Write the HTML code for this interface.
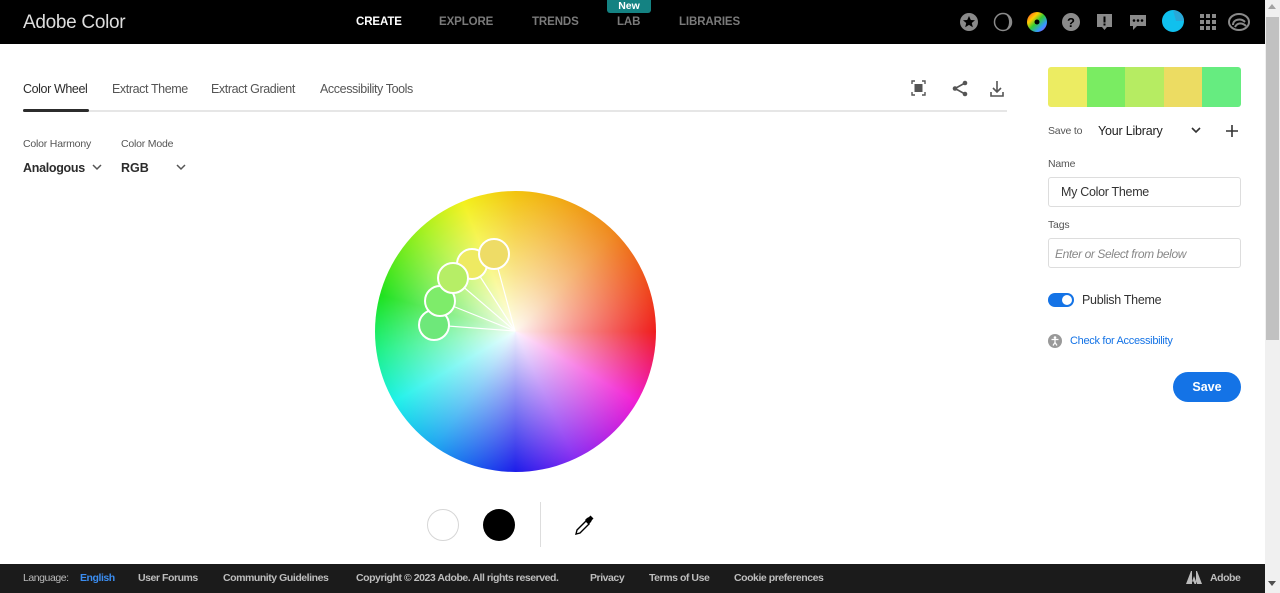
<!DOCTYPE html>
<html><head><meta charset="utf-8">
<style>
*{margin:0;padding:0;box-sizing:border-box}
body{width:1280px;height:593px;overflow:hidden;background:#fff;font-family:"Liberation Sans",sans-serif;position:relative;color:#2c2c2c}
.a{position:absolute;white-space:nowrap}
#top{position:absolute;left:0;top:0;width:1265px;height:44px;background:#000}
.nav{font-size:11.5px;font-weight:bold;color:#7a7a7a;top:16px;letter-spacing:-.1px}
.tab{font-size:12.5px;color:#555;top:82px;letter-spacing:-.4px}
.lbl{font-size:10.5px;color:#555;letter-spacing:-.2px}
#foot{position:absolute;left:0;top:564px;width:1265px;height:29px;background:#1b1b1b}
.f{font-size:10.5px;font-weight:bold;color:#bdbdbd;top:572px;letter-spacing:-.45px}
</style></head><body>
<div id="top"></div>
<div class="a" style="left:23px;top:12px;font-size:19px;color:#ddd;letter-spacing:-.3px">Adobe Color</div>
<div class="a nav" style="left:356px;color:#fff">CREATE</div>
<div class="a nav" style="left:439px">EXPLORE</div>
<div class="a nav" style="left:532px">TRENDS</div>
<div class="a" style="left:607px;top:0;width:44px;height:13px;background:#148282;border-radius:0 0 3px 3px;color:#fff;font-size:10.5px;font-weight:bold;text-align:center;line-height:12px">New</div>
<div class="a nav" style="left:617px">LAB</div>
<div class="a nav" style="left:679px">LIBRARIES</div>
<svg class="a" style="left:958px;top:10px" width="300" height="24" viewBox="0 0 300 24">
<defs><linearGradient id="g" x1="0" y1="0" x2="1" y2="1"><stop offset="0" stop-color="#f33"/><stop offset=".3" stop-color="#fc0"/><stop offset=".5" stop-color="#3c3"/><stop offset=".75" stop-color="#39f"/><stop offset="1" stop-color="#c3f"/></linearGradient></defs>
<circle cx="11" cy="12" r="9" fill="#8a8a8a"/><path d="M11 6l1.8 4 4.2.3-3.2 2.7 1 4.2-3.8-2.3-3.8 2.3 1-4.2-3.2-2.7 4.2-.3z" fill="#000"/>
<circle cx="45" cy="12" r="8.5" fill="none" stroke="#8a8a8a" stroke-width="1.5"/><path d="M45 3.5a8.5 8.5 0 0 1 0 17a6 8.5 0 0 0 0-17z" fill="#8a8a8a"/>
<circle cx="79" cy="12" r="10" fill="url(#g)"/><circle cx="79" cy="12" r="2.5" fill="#000"/>
<circle cx="113" cy="12" r="9" fill="#8a8a8a"/><text x="113" y="17" font-size="13" font-weight="bold" text-anchor="middle" fill="#000" font-family="Liberation Sans">?</text>
<path d="M139 4h15v13h-5l-2.5 3-2.5-3h-5z" fill="#8a8a8a"/><rect x="145.5" y="6.5" width="2" height="6" fill="#000"/><rect x="145.5" y="13.5" width="2" height="2" fill="#000"/>
<path d="M172 5h16v11h-9l-4 4v-4h-3z" fill="#8a8a8a"/><circle cx="176" cy="10.5" r="1.3" fill="#000"/><circle cx="180" cy="10.5" r="1.3" fill="#000"/><circle cx="184" cy="10.5" r="1.3" fill="#000"/>
<circle cx="215" cy="11" r="11" fill="#10c0ee"/><path d="M215 0a11 11 0 0 1 11 11h-8z" fill="#2aa8d8"/>
<g fill="#8a8a8a"><rect x="242" y="4" width="4" height="4"/><rect x="248" y="4" width="4" height="4"/><rect x="254" y="4" width="4" height="4"/><rect x="242" y="10" width="4" height="4"/><rect x="248" y="10" width="4" height="4"/><rect x="254" y="10" width="4" height="4"/><rect x="242" y="16" width="4" height="4"/><rect x="248" y="16" width="4" height="4"/><rect x="254" y="16" width="4" height="4"/></g>
<g fill="none" stroke="#8a8a8a" stroke-width="2"><ellipse cx="281" cy="12" rx="10" ry="8"/><path d="M275 15c0-6 8-7 12-3M277 17c2-4 7-5 11-1"/></g>
</svg>
<div class="a" style="left:1265px;top:0;width:15px;height:593px;background:#f0f0f0"></div>
<div class="a" style="left:1266px;top:17px;width:13px;height:323px;background:#c1c1c1"></div>
<div class="a" style="left:1268px;top:4px;width:0;height:0;border:4px solid transparent;border-bottom:5px solid #a3a3a3;border-top:0"></div>
<div class="a" style="left:1268px;top:581px;width:0;height:0;border:4px solid transparent;border-top:5px solid #505050;border-bottom:0"></div>
<div class="a tab" style="left:23px;color:#2c2c2c">Color Wheel</div>
<div class="a tab" style="left:112px">Extract Theme</div>
<div class="a tab" style="left:211px">Extract Gradient</div>
<div class="a tab" style="left:320px">Accessibility Tools</div>
<div class="a" style="left:23px;top:110px;width:984px;height:2px;background:#e6e6e6"></div>
<div class="a" style="left:23px;top:109px;width:66px;height:3px;background:#2c2c2c;border-radius:2px"></div>
<svg class="a" style="left:908px;top:78px" width="100" height="22">
<g fill="none" stroke="#555" stroke-width="1.4"><path d="M4 6V3h3M14 3h3v3M17 14v3h-3M7 17H4v-3"/></g><rect x="6.5" y="6" width="8" height="8" fill="#555"/>
<g fill="#555"><circle cx="57" cy="5" r="2.3"/><circle cx="57" cy="16" r="2.3"/><circle cx="47" cy="10.5" r="2.3"/></g><path d="M57 5L47 10.5L57 16" stroke="#555" stroke-width="1.6" fill="none"/>
<path d="M89 3v11M85 10l4 4 4-4M83 14v4h12v-4" stroke="#555" stroke-width="1.6" fill="none"/>
</svg>
<div class="a lbl" style="left:23px;top:138px">Color Harmony</div>
<div class="a lbl" style="left:121px;top:138px">Color Mode</div>
<div class="a" style="left:23px;top:161px;font-size:12.5px;font-weight:bold;letter-spacing:-.3px">Analogous</div>
<div class="a" style="left:121px;top:161px;font-size:12.5px;font-weight:bold">RGB</div>
<svg class="a" style="left:91px;top:163px" width="100" height="10"><path d="M2 2l4 4 4-4M86 2l4 4 4-4" stroke="#555" stroke-width="1.5" fill="none"/></svg>
<div class="a" style="left:375px;top:191px;width:281px;height:281px;border-radius:50%;background:conic-gradient(from 0deg,#f2c000 0deg,#ee8010 45deg,#ee1010 90deg,#f010d0 120deg,#8020f0 155deg,#1010e8 180deg,#10a0f0 215deg,#10f0e8 240deg,#10f080 262deg,#10e010 285deg,#a0f010 318deg,#f2f010 338deg,#f2c000 360deg)"></div>
<div class="a" style="left:375px;top:191px;width:281px;height:281px;border-radius:50%;background:radial-gradient(circle,rgba(255,255,255,.95) 0%,rgba(255,255,255,.55) 30%,rgba(255,255,255,0) 75%)"></div>
<svg class="a" style="left:375px;top:191px" width="281" height="281">
<g stroke="#fff" stroke-width="1.2"><line x1="140" y1="140" x2="119" y2="63"/><line x1="140" y1="140" x2="97" y2="73"/><line x1="140" y1="140" x2="78" y2="87"/><line x1="140" y1="140" x2="65" y2="110"/><line x1="140" y1="140" x2="59" y2="134"/></g>
<g stroke="#fff" stroke-width="2">
<circle cx="59" cy="134" r="15" fill="#6ee87a"/>
<circle cx="65" cy="110" r="15" fill="#7eec6a"/>
<circle cx="97" cy="73" r="15" fill="#eeea62"/>
<circle cx="78" cy="87" r="15" fill="#b6ee66"/>
<circle cx="119" cy="63" r="15" fill="#eedc66"/>
</g></svg>
<div class="a" style="left:427px;top:509px;width:32px;height:32px;border-radius:50%;border:1px solid #d6d6d6;background:#fff"></div>
<div class="a" style="left:483px;top:509px;width:32px;height:32px;border-radius:50%;background:#000"></div>
<div class="a" style="left:540px;top:502px;width:1px;height:45px;background:#ddd"></div>
<svg class="a" style="left:573px;top:514px" width="24" height="24"><path d="M3 20l1-4 9-9 3 3-9 9z" fill="#fff" stroke="#000" stroke-width="1.4"/><path d="M12 6l2-2 2-1 1.5-1.5 3 3L19 6l-1 2-2 2z" fill="#000"/></svg>
<div class="a" style="left:1048px;top:67px;width:193px;height:40px;border-radius:3px;overflow:hidden;display:flex">
<div style="flex:1;background:#ecec62"></div><div style="flex:1;background:#7aec62"></div><div style="flex:1;background:#b6ec62"></div><div style="flex:1;background:#ecdc62"></div><div style="flex:1;background:#66ec80"></div></div>
<div class="a lbl" style="left:1048px;top:125px">Save to</div>
<div class="a" style="left:1098px;top:124px;font-size:12.5px;color:#222;letter-spacing:-.2px">Your Library</div>
<svg class="a" style="left:1190px;top:124px" width="50" height="14"><path d="M2 4l4 4 4-4" stroke="#333" stroke-width="1.6" fill="none"/><path d="M42 1v12M36 7h12" stroke="#333" stroke-width="1.6"/></svg>
<div class="a lbl" style="left:1048px;top:158px">Name</div>
<div class="a" style="left:1048px;top:177px;width:193px;height:30px;border:1px solid #ddd;border-radius:3px;font-size:12.5px;padding:7px 12px;color:#333;letter-spacing:-.3px">My Color Theme</div>
<div class="a lbl" style="left:1048px;top:219px">Tags</div>
<div class="a" style="left:1048px;top:238px;width:193px;height:30px;border:1px solid #ddd;border-radius:3px;font-size:12px;padding:8px 6px;color:#888;font-style:italic;letter-spacing:-.4px">Enter or Select from below</div>
<div class="a" style="left:1048px;top:293px;width:26px;height:14px;border-radius:7px;background:#1473e6"></div>
<div class="a" style="left:1062px;top:295px;width:10px;height:10px;border-radius:50%;background:#fff"></div>
<div class="a" style="left:1082px;top:293px;font-size:12.5px;color:#333;letter-spacing:-.3px">Publish Theme</div>
<svg class="a" style="left:1048px;top:334px" width="14" height="14"><circle cx="7" cy="7" r="7" fill="#999"/><circle cx="7" cy="3.6" r="1.3" fill="#fff"/><path d="M3.5 5.5h7M7 5.5v3l-2 3M7 8.5l2 3" stroke="#fff" stroke-width="1.2" fill="none"/></svg>
<div class="a" style="left:1070px;top:335px;font-size:11px;color:#1473e6;letter-spacing:-.3px">Check for Accessibility</div>
<div class="a" style="left:1173px;top:372px;width:68px;height:30px;border-radius:15px;background:#1473e6;color:#fff;font-size:12.5px;font-weight:bold;text-align:center;line-height:30px">Save</div>
<div id="foot"></div>
<div class="a f" style="left:23px;font-weight:normal;color:#bbb">Language:</div>
<div class="a f" style="left:80px;color:#3b8df0">English</div>
<div class="a f" style="left:138px">User Forums</div>
<div class="a f" style="left:223px">Community Guidelines</div>
<div class="a f" style="left:356px">Copyright © 2023 Adobe. All rights reserved.</div>
<div class="a f" style="left:590px">Privacy</div>
<div class="a f" style="left:649px">Terms of Use</div>
<div class="a f" style="left:734px">Cookie preferences</div>
<svg class="a" style="left:1186px;top:571px" width="16" height="13"><path d="M0 13L5 0h1v13zM16 13L11 0h-1v13zM8 5l3 8H8.5L7.5 10.5H6z" fill="#bbb"/></svg>
<div class="a f" style="left:1210px">Adobe</div>
</body></html>
